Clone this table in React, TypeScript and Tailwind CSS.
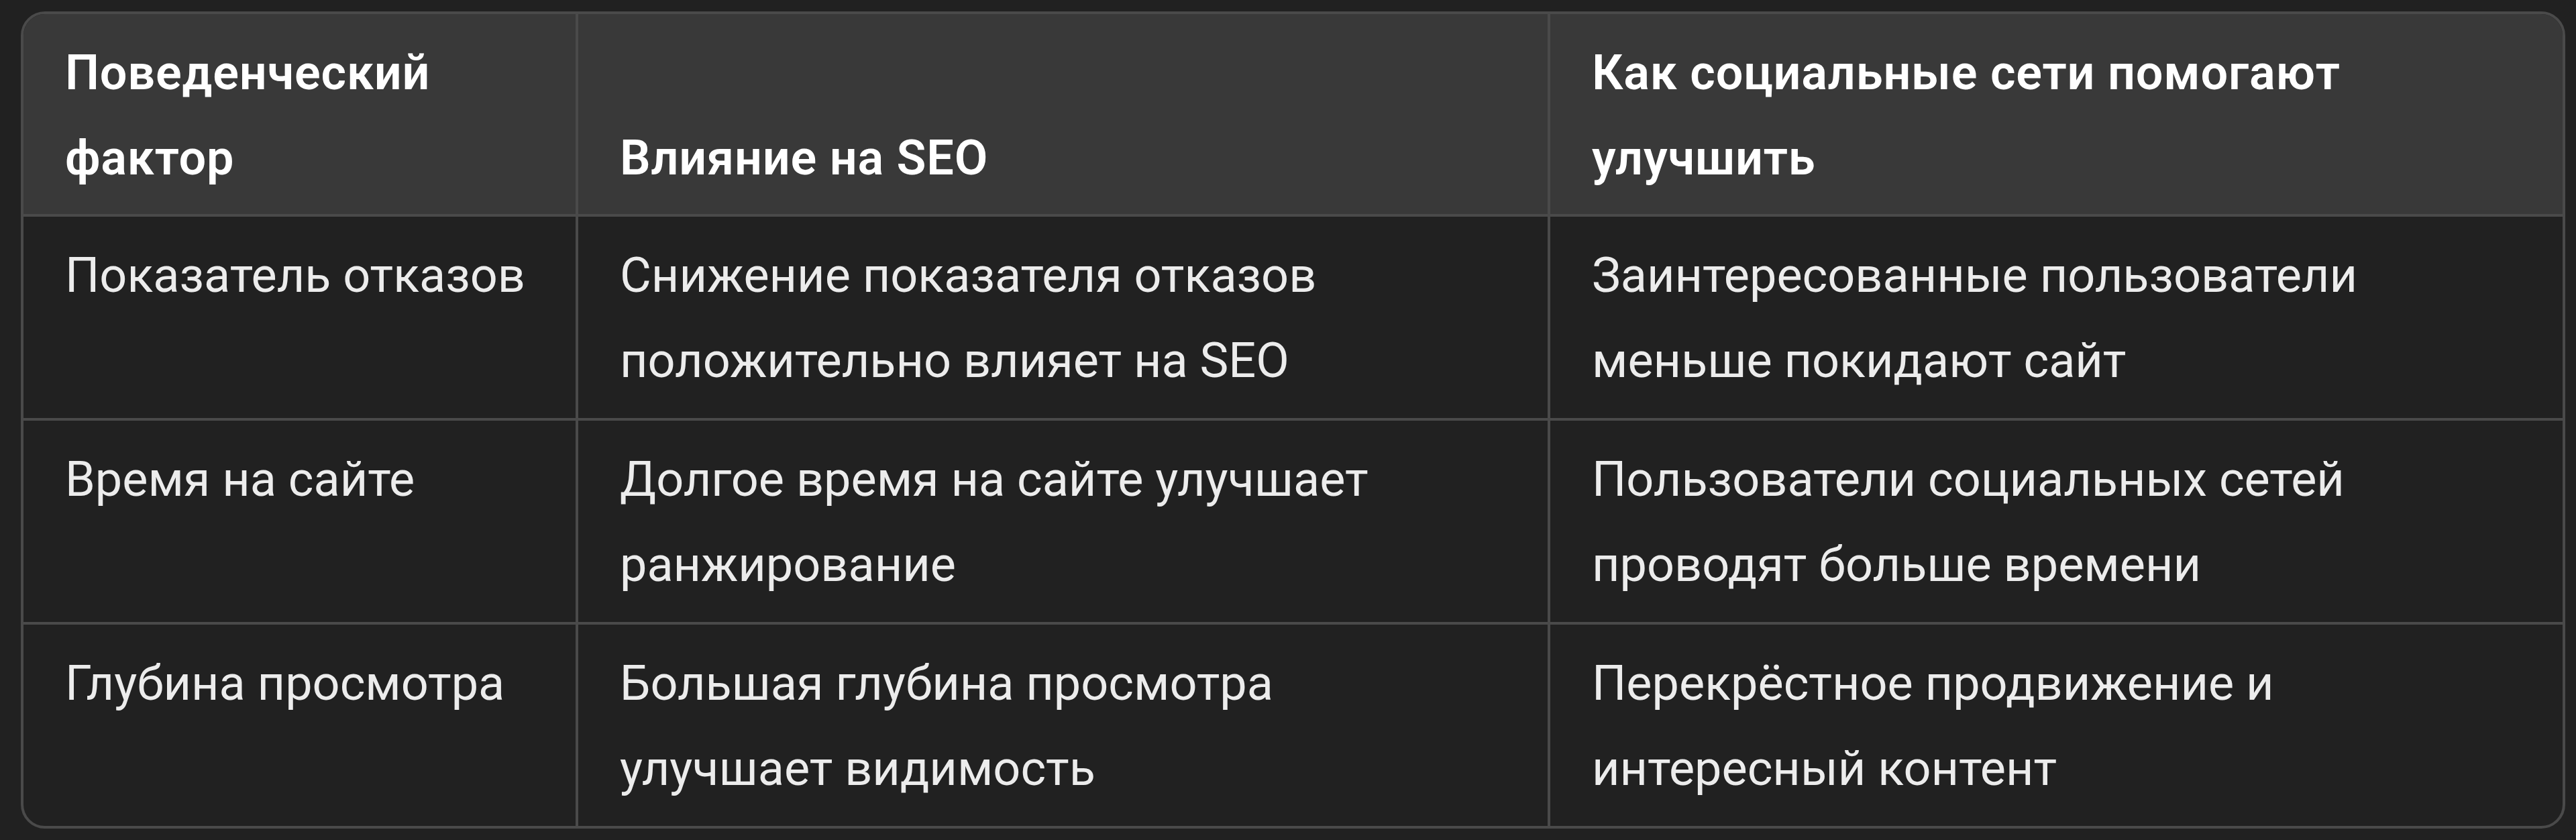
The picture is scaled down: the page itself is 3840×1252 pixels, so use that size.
import React from 'react';

const headers = ['Поведенческий фактор', 'Влияние на SEO', 'Как социальные сети помогают улучшить'];

const rows: string[][] = [
    ['Показатель отказов', 'Снижение показателя отказов положительно влияет на SEO', 'Заинтересованные пользователи меньше покидают сайт'],
    ['Время на сайте', 'Долгое время на сайте улучшает ранжирование', 'Пользователи социальных сетей проводят больше времени'],
    ['Глубина просмотра', 'Большая глубина просмотра улучшает видимость', 'Перекрёстное продвижение и интересный контент'],
];

// right padding differs per column so the lines break where the original does
const padRight = ['pr-[40px]', 'pr-[110px]', 'pr-[72px]'];

export default function App() {
    return (
        <div className="min-h-[1252px] w-[3840px] bg-[#212121] pt-[17px] pl-[31px] font-['Roboto','Noto_Sans',sans-serif]">
            <div className="w-[3793px] rounded-[36px] border-4 border-[#4a4a4a] overflow-hidden bg-[#212121]">
                <div className="grid grid-cols-[827px_1449px_1fr]">
                    {/* Header */}
                    {headers.map((h, i) => (
                        <div
                            key={h}
                            className={`flex flex-col justify-end bg-[#393939] border-b-4 border-[#4a4a4a] pl-[62px] ${padRight[i]} pt-[24px] pb-[20px] text-[72px] leading-[127px] font-semibold tracking-[0.8px] text-white ${i < 2 ? 'border-r-4' : ''}`}
                        >
                            {h}
                        </div>
                    ))}

                    {/* Body */}
                    {rows.map((row, r) =>
                        row.map((cell, c) => (
                            <div
                                key={`${r}-${c}`}
                                className={`border-[#4a4a4a] pl-[62px] ${padRight[c]} pt-[24px] pb-[22px] text-[72px] leading-[127px] text-[#ececec] ${c < 2 ? 'border-r-4' : ''} ${r < rows.length - 1 ? 'border-b-4' : ''}`}
                            >
                                {cell}
                            </div>
                        ))
                    )}
                </div>
            </div>
        </div>
    );
}
